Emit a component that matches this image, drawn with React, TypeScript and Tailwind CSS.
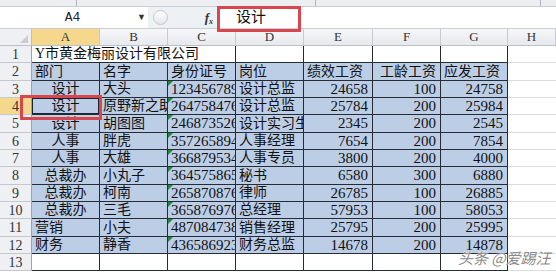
import React from "react";

const BLUE = "bg-[#bccde6]";
const DARK_R = "border-r border-r-[#262b36]";
const DARK_B = "border-b border-b-[#262b36]";

type Align = "l" | "c" | "r";

const rows: [string, string, string, string, string, string, string][] = [
  ["设计", "大头", "123456789012345678", "设计总监", "24658", "100", "24758"],
  ["设计", "原野新之助", "264758476332145698", "设计总监", "25784", "200", "25984"],
  ["设计", "胡图图", "246873526198703254", "设计实习生", "2345", "200", "2545"],
  ["人事", "胖虎", "357265894198204561", "人事经理", "7654", "200", "7854"],
  ["人事", "大雄", "366879534198512347", "人事专员", "3800", "200", "4000"],
  ["总裁办", "小丸子", "364575865199003215", "秘书", "6580", "300", "6880"],
  ["总裁办", "柯南", "265870876198807412", "律师", "26785", "100", "26885"],
  ["总裁办", "三毛", "365876976197905123", "总经理", "57953", "100", "58053"],
  ["营销", "小夫", "487084738198611029", "销售经理", "25795", "200", "25995"],
  ["财务", "静香", "436586923198409176", "财务总监", "14678", "200", "14878"],
];

function Cell({
  text,
  align = "l",
  className = "",
  flag = false,
  num = false,
}: {
  text?: string;
  align?: Align;
  className?: string;
  flag?: boolean;
  num?: boolean;
}) {
  const justify =
    align === "c" ? "justify-center" : align === "r" ? "justify-end pr-[4px]" : "justify-start pl-[3px]";
  return (
    <div
      className={`relative flex items-center overflow-hidden whitespace-nowrap leading-none text-[#111] ${
        num ? "text-[15px]" : "text-[14px]"
      } ${justify} ${className}`}
    >
      {flag && (
        <span className="absolute left-0 top-0 h-0 w-0 border-r-[5px] border-t-[5px] border-r-transparent border-t-[#1e8a3c]" />
      )}
      {text}
    </div>
  );
}

function RowHead({ n, active = false }: { n: number; active?: boolean }) {
  return (
    <div
      className={`flex items-center justify-center border-b border-b-[#c3c8cf] border-r border-r-[#9aa3ae] text-[14px] text-[#333] ${
        active ? "bg-[#f6d88c]" : "bg-[#eef0f3]"
      }`}
    >
      {n}
    </div>
  );
}

export default function App() {
  const cols = ["A", "B", "C", "D", "E", "F", "G", "H"];

  return (
    <div
      className="relative h-[272px] w-[556px] overflow-hidden bg-white"
      style={{ fontFamily: '"Liberation Serif", "Noto Sans CJK SC", serif' }}
    >
      {/* ribbon remnant */}
      <div className="flex h-[7px] border-b border-b-[#c9ced6] bg-[#eceef1]">
        <div className="w-[77px] border-r border-r-[#b0b6bf]" />
        <div className="w-[239px] border-r border-r-[#b0b6bf]" />
        <div className="w-[225px] border-r border-r-[#b0b6bf]" />
      </div>

      {/* formula bar */}
      <div className="flex h-[22px] items-stretch border-b border-b-[#c9ced6] bg-[#eef1f4]">
        <div className="flex w-[148px] items-center bg-white">
          <span className="flex-1 pl-[8px] text-center font-['Liberation_Mono'] text-[13px] text-[#222]">
            A4
          </span>
          <span className="mr-[2px] text-[9px] text-[#333]">▼</span>
        </div>
        <div className="flex w-[69px] items-center">
          <div className="ml-[5px] h-[15px] w-[15px] rounded-full border border-[#c2c7ce] bg-gradient-to-b from-[#ffffff] to-[#e3e6ea]" />
          <span className="ml-auto mr-[4px] text-[13px] font-bold italic text-[#333]">
            f<sub className="text-[8px]">x</sub>
          </span>
        </div>
        <div className="flex flex-1 items-center border-l border-l-[#c9ced6] bg-white pl-[18px] text-[15px] text-[#111]">
          设计
        </div>
      </div>

      {/* sheet */}
      <div className="grid grid-cols-[32px_68px_68px_68px_68px_69px_68px_67px_48px] grid-rows-[17px_17px_18px_17px_17px_18px_17px_17px_18px_17px_17px_18px_17px_17px]">
        <div className="relative border-b border-b-[#b9c0c9] border-r border-r-[#b9c0c9] bg-[#eef0f3]">
          <span className="absolute bottom-[2px] right-[3px] h-0 w-0 border-b-[8px] border-l-[8px] border-b-[#c7ccd3] border-l-transparent" />
        </div>
        {cols.map((c) => (
          <div
            key={c}
            className={`flex items-center justify-center border-b border-b-[#b9c0c9] border-r border-r-[#c5cad1] text-[13px] text-[#333] ${
              c === "A" ? "bg-[#f6d88c]" : "bg-gradient-to-b from-[#f6f7f9] to-[#e6e9ed]"
            }`}
          >
            {c}
          </div>
        ))}

        {/* row 1 */}
        <RowHead n={1} />
        <Cell text="Y市黄金梅丽设计有限公司" className={`col-span-3 ${DARK_R} ${DARK_B}`} />
        <Cell className={`${DARK_R} ${DARK_B}`} />
        <Cell className={`${DARK_R} ${DARK_B}`} />
        <Cell className={`${DARK_R} ${DARK_B}`} />
        <Cell className={`${DARK_R} ${DARK_B}`} />
        <Cell className="border-b border-b-[#d9dde3]" />

        {/* row 2 */}
        <RowHead n={2} />
        {["部门", "名字", "身份证号", "岗位", "绩效工资", "工龄工资", "应发工资"].map((t, j) => (
          <Cell key={t} text={t} align={j === 5 ? "r" : "l"} className={`${BLUE} ${DARK_R} ${DARK_B}`} />
        ))}
        <Cell className="border-b border-b-[#d9dde3]" />

        {rows.map((r, i) => {
          const n = i + 3;
          const centered = n <= 10;
          return (
            <React.Fragment key={n}>
              <RowHead n={n} active={n === 4} />
              <Cell
                text={r[0]}
                align={centered ? "c" : "l"}
                className={`${BLUE} ${DARK_R} ${DARK_B} ${n === 4 ? "shadow-[inset_0_0_0_1px_#1b2230]" : ""}`}
              />
              <Cell text={r[1]} className={`${BLUE} ${DARK_R} ${DARK_B}`} />
              <Cell text={r[2]} num flag className={`${BLUE} ${DARK_R} ${DARK_B}`} />
              <Cell text={r[3]} className={`${BLUE} ${DARK_R} ${DARK_B}`} />
              <Cell text={r[4]} num align="r" className={`${BLUE} ${DARK_R} ${DARK_B}`} />
              <Cell text={r[5]} num align="r" className={`${BLUE} ${DARK_R} ${DARK_B}`} />
              <Cell text={r[6]} num align="r" className={`${BLUE} ${DARK_R} ${DARK_B}`} />
              <Cell className="border-b border-b-[#d9dde3]" />
            </React.Fragment>
          );
        })}

        {/* row 13 */}
        <RowHead n={13} />
        {[0, 1, 2, 3, 4, 5, 6].map((j) => (
          <Cell key={j} className={`${DARK_R} ${DARK_B}`} />
        ))}
        <Cell className="border-b border-b-[#d9dde3]" />
      </div>

      {/* red highlight boxes */}
      <div className="absolute left-[217px] top-[6px] h-[26px] w-[84px] border-[3px] border-[#d8474d]" />
      <div className="absolute left-[20px] top-[95px] h-[25px] w-[82px] border-[3px] border-[#d8474d]" />

      {/* watermark */}
      <div
        className="absolute left-[458px] top-[247px] text-[15px] italic text-[#8a8a8a] [text-shadow:0_0_2px_#fff,0_0_2px_#fff]"
        style={{ fontFamily: '"Noto Sans CJK SC", sans-serif' }}
      >
        头条 @爱踢汪
      </div>
    </div>
  );
}
